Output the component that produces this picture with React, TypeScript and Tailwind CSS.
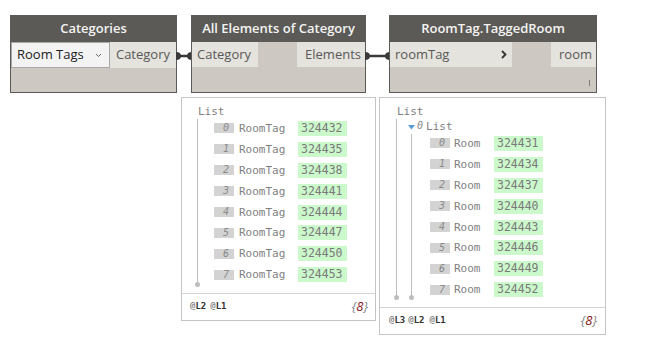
import React from "react";

const sans = { fontFamily: '"Open Sans", "Noto Sans", sans-serif' };
const mono = { fontFamily: '"DejaVu Sans Mono", "Liberation Mono", monospace' };

function Wire({ left, width }: { left: number; width: number }) {
  return (
    <svg
      className="absolute"
      style={{ left, top: 49 }}
      width={width}
      height={14}
      viewBox={`0 0 ${width} 14`}
    >
      <path d={`M0 3 Q5 3 5 7 Q5 11 0 11 Z`} fill="#3a3a3a" />
      <path d={`M${width} 3 Q${width - 5} 3 ${width - 5} 7 Q${width - 5} 11 ${width} 11 Z`} fill="#3a3a3a" />
      <line x1={3} y1={7} x2={width - 3} y2={7} stroke="#3a3a3a" strokeWidth={2.5} />
    </svg>
  );
}

function Node({
  left,
  width,
  title,
  children,
}: {
  left: number;
  width: number;
  title: string;
  children: React.ReactNode;
}) {
  return (
    <div
      className="absolute top-[15px] h-[78px] flex flex-col border border-[#5b5a56] bg-[#cdc9c2]"
      style={{ left, width }}
    >
      <div
        className="h-[26px] bg-[#5b5a56] text-[#f4f4f4] text-[13px] font-semibold flex items-center justify-center"
        style={sans}
      >
        {title}
      </div>
      {children}
    </div>
  );
}

export default function App() {
  const p1 = ["324432", "324435", "324438", "324441", "324444", "324447", "324450", "324453"];
  const p2 = ["324431", "324434", "324437", "324440", "324443", "324446", "324449", "324452"];
  return (
    <div className="relative w-[658px] h-[346px] bg-white overflow-hidden">
      {/* Node 1 */}
      <Node left={10} width={167} title="Categories">
        <div className="flex h-[26px]" style={sans}>
          <div className="w-[99px] h-[26px] bg-[#f3f3f3] border border-[#a8a8a8] flex items-center justify-between pl-[5px] pr-[7px] text-[13px] text-[#222]">
            <span>Room Tags</span>
            <svg width="7" height="5" viewBox="0 0 7 5">
              <path d="M1 1 L3.5 3.5 L6 1" stroke="#666" strokeWidth="1" fill="none" />
            </svg>
          </div>
          <div className="flex-1 bg-[#e5e3de] flex items-center justify-end pr-[6px] text-[13px] text-[#585858]">
            Category
          </div>
        </div>
      </Node>

      <Wire left={176} width={16} />

      {/* Node 2 */}
      <Node left={191} width={175} title="All Elements of Category">
        <div className="flex justify-between h-[25px] text-[13px] text-[#585858]" style={sans}>
          <div className="w-[66px] bg-[#e5e3de] flex items-center pl-[5px]">Category</div>
          <div className="w-[68px] bg-[#e5e3de] flex items-center justify-end pr-[4px]">Elements</div>
        </div>
      </Node>

      <Wire left={365} width={25} />

      {/* Node 3 */}
      <Node left={389} width={208} title="RoomTag.TaggedRoom">
        <div className="flex justify-between h-[25px] text-[13px] text-[#585858]" style={sans}>
          <div className="w-[122px] bg-[#e5e3de] flex items-center justify-between pl-[5px] pr-[5px]">
            <span>roomTag</span>
            <svg width="6" height="9" viewBox="0 0 6 9">
              <path d="M1 1 L4.5 4.5 L1 8" stroke="#333" strokeWidth="1.8" fill="none" />
            </svg>
          </div>
          <div className="w-[45px] bg-[#e5e3de] flex items-center justify-end pr-[4px]">room</div>
        </div>
        <div className="flex-1 flex items-end justify-end pr-[6px] pb-[6px]">
          <div className="w-[1px] h-[6px] bg-[#7a7a7a]" />
        </div>
      </Node>

      {/* Preview 1 */}
      <div className="absolute left-[181px] top-[97px] w-[195px] h-[224px] border border-[#c4c4c4] bg-white flex flex-col">
        <div className="relative flex-1">
          <div className="absolute left-[15px] top-[21px] w-[1px] h-[165px] bg-[#bdbdbd]" />
          <div className="absolute left-[13px] top-[184px] w-[5px] h-[5px] rounded-full bg-[#bdbdbd]" />
          <div className="pl-[16px] pt-[8px] h-[16px] text-[11px] leading-none text-[#7f7f7f]" style={mono}>
            List
          </div>
          <div className="mt-[4px]">
            {p1.map((v, i) => (
              <div key={i} className="h-[20.9px] flex items-center pl-[32px]">
                <div
                  className="w-[20px] h-[10px] bg-[#d3d3d3] text-[#8a8a8a] text-[10px] italic leading-[10px] text-right pr-[5px]"
                  style={mono}
                >
                  {i}
                </div>
                <div className="w-[59px] text-[#7f7f7f] text-[11px] ml-[5px] leading-none" style={mono}>
                  RoomTag
                </div>
                <div
                  className="w-[49px] h-[15px] bg-[#ccf9cc] text-[#7a7a7a] text-[11.5px] leading-[15px] pl-[3px]"
                  style={mono}
                >
                  {v}
                </div>
              </div>
            ))}
          </div>
        </div>
        <div className="h-[27px] border-t border-[#d4d4d4] flex items-center justify-between pl-[8px] pr-[7px]">
          <div className="text-[9px] font-bold text-[#333] flex gap-[4px]" style={mono}>
            <span><span className="text-[#888]">@</span>L2</span>
            <span><span className="text-[#888]">@</span>L1</span>
          </div>
          <div className="text-[13px] italic text-[#888]" style={sans}>
            {"{"}<span className="text-[#8b1a1a]">8</span>{"}"}
          </div>
        </div>
      </div>

      {/* Preview 2 */}
      <div className="absolute left-[379px] top-[97px] w-[227px] h-[238px] border border-[#c4c4c4] bg-white flex flex-col">
        <div className="relative flex-1">
          <div className="absolute left-[16px] top-[21px] w-[1px] h-[178px] bg-[#bdbdbd]" />
          <div className="absolute left-[14px] top-[197px] w-[5px] h-[5px] rounded-full bg-[#bdbdbd]" />
          <div className="absolute left-[31px] top-[36px] w-[1px] h-[163px] bg-[#bdbdbd]" />
          <div className="absolute left-[29px] top-[197px] w-[5px] h-[5px] rounded-full bg-[#bdbdbd]" />
          <div className="pl-[17px] pt-[8px] h-[16px] text-[11px] leading-none text-[#7f7f7f]" style={mono}>
            List
          </div>
          <div className="pl-[28px] mt-[4px] h-[16px] flex items-center text-[11px] leading-none text-[#7f7f7f]" style={mono}>
            <svg width="7" height="5" viewBox="0 0 7 5" className="mt-[3px]">
              <path d="M0 0 L7 0 L3.5 4.5 Z" fill="#5b9bd5" />
            </svg>
            <span className="italic text-[10px] ml-[2px] text-[#8a8a8a]">0</span>
            <span className="ml-[3px]">List</span>
          </div>
          <div className="-mt-[1px]">
            {p2.map((v, i) => (
              <div key={i} className="h-[20.9px] flex items-center pl-[50px]">
                <div
                  className="w-[20px] h-[10px] bg-[#d3d3d3] text-[#8a8a8a] text-[10px] italic leading-[10px] text-right pr-[5px]"
                  style={mono}
                >
                  {i}
                </div>
                <div className="w-[40px] text-[#7f7f7f] text-[11px] ml-[4px] leading-none" style={mono}>
                  Room
                </div>
                <div
                  className="w-[49px] h-[15px] bg-[#ccf9cc] text-[#7a7a7a] text-[11.5px] leading-[15px] pl-[3px]"
                  style={mono}
                >
                  {v}
                </div>
              </div>
            ))}
          </div>
        </div>
        <div className="h-[27px] border-t border-[#d4d4d4] flex items-center justify-between pl-[9px] pr-[8px]">
          <div className="text-[9px] font-bold text-[#333] flex gap-[3px]" style={mono}>
            <span><span className="text-[#888]">@</span>L3</span>
            <span><span className="text-[#888]">@</span>L2</span>
            <span className="ml-[2px]"><span className="text-[#888]">@</span>L1</span>
          </div>
          <div className="text-[13px] italic text-[#888]" style={sans}>
            {"{"}<span className="text-[#8b1a1a]">8</span>{"}"}
          </div>
        </div>
      </div>
    </div>
  );
}
